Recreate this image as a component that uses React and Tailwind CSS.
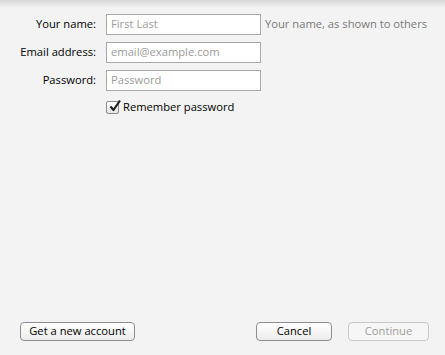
export default function App() {
  const font = { fontFamily: '"Open Sans", "Liberation Sans", sans-serif' };
  const Row = ({ label, placeholder, hint }) => (
    <div className="flex items-center h-[21px]">
      <div className="w-[106px] shrink-0 text-right pr-[10px] text-[11.2px] text-black whitespace-nowrap">{label}</div>
      <div className="w-[155px] shrink-0 h-[21px] border border-[#a8a8a8] bg-white flex items-center pl-[4px] text-[11.2px] text-[#9b9b9b] whitespace-nowrap">
        {placeholder}
      </div>
      {hint && <div className="ml-[4px] text-[11.2px] text-[#7a7a7a] whitespace-nowrap">{hint}</div>}
    </div>
  );
  const btn = "h-[19px] shrink-0 rounded-[4px] text-[11.2px] flex items-center justify-center whitespace-nowrap";
  return (
    <div
      className="w-[445px] h-[355px] bg-[#f3f3f3] relative flex flex-col overflow-hidden"
      style={font}
    >
      <div className="absolute top-0 left-0 right-0 h-[8px] bg-gradient-to-b from-[#d6d6d6] to-[#f3f3f3]" />
      <div className="pt-[14px] flex flex-col gap-[7px] relative">
        <Row label="Your name:" placeholder="First Last" hint="Your name, as shown to others" />
        <Row label="Email address:" placeholder="email@example.com" />
        <Row label="Password:" placeholder="Password" />
        <div className="flex items-center pl-[106px] mt-[1px]">
          <div className="w-[13px] h-[13px] shrink-0 border border-[#8c8c8c] rounded-[2px] bg-gradient-to-b from-white to-[#e4e4e4] relative">
            <svg viewBox="0 0 14 14" className="absolute left-[1px] top-[-3px] w-[14px] h-[14px]">
              <path d="M2.5 7.5 L5.5 11 L12 1.5" fill="none" stroke="#222" strokeWidth="2.2" strokeLinejoin="round" />
            </svg>
          </div>
          <span className="ml-[4px] text-[11.2px] text-black whitespace-nowrap">Remember password</span>
        </div>
      </div>
      <div className="flex-1" />
      <div className="flex items-center pl-[20px] pr-[16px] pb-[14px]">
        <button className={`${btn} w-[115px] border border-[#8e8e8e] bg-gradient-to-b from-white to-[#ececec] text-black`}>
          Get a new account
        </button>
        <div className="flex-1" />
        <button className={`${btn} w-[76px] border border-[#8e8e8e] bg-gradient-to-b from-white to-[#ececec] text-black`}>
          Cancel
        </button>
        <button className={`${btn} ml-[16px] w-[81px] border border-[#c8c8c8] bg-[#f6f6f6] text-[#a0a0a0]`}>
          Continue
        </button>
      </div>
    </div>
  );
}
